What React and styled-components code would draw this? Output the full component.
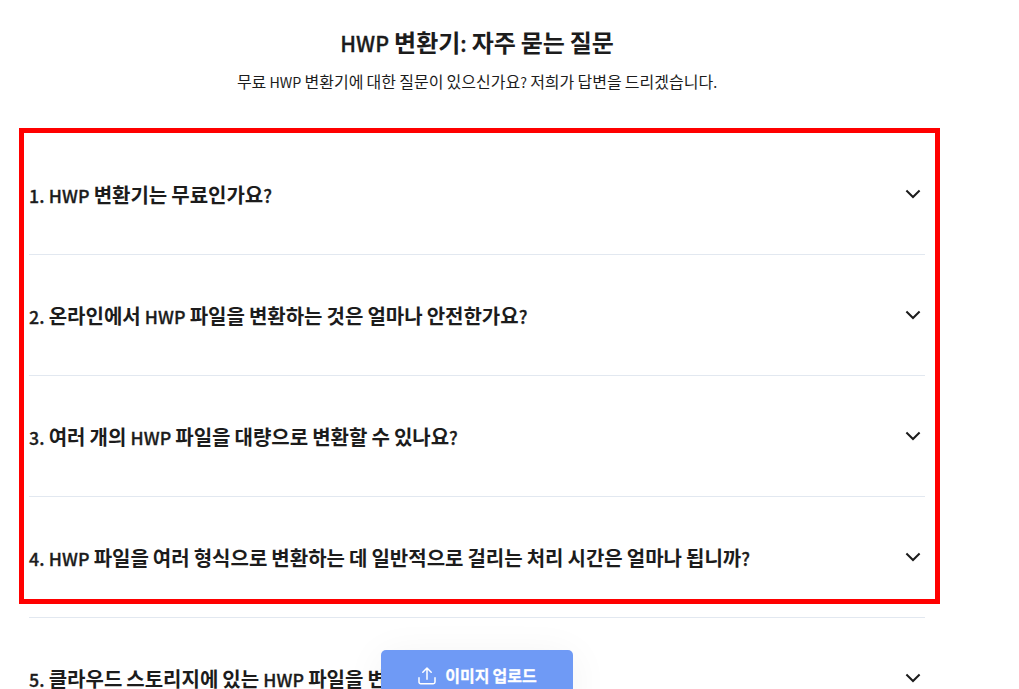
import React, { useState } from "react";
import styled, { createGlobalStyle } from "styled-components";

const questions = [
  "1. HWP 변환기는 무료인가요?",
  "2. 온라인에서 HWP 파일을 변환하는 것은 얼마나 안전한가요?",
  "3. 여러 개의 HWP 파일을 대량으로 변환할 수 있나요?",
  "4. HWP 파일을 여러 형식으로 변환하는 데 일반적으로 걸리는 처리 시간은 얼마나 됩니까?",
  "5. 클라우드 스토리지에 있는 HWP 파일을 변환할 수 있나요?",
];

const GlobalStyle = createGlobalStyle`
  * { box-sizing: border-box; }
  html, body, #root { height: 100%; }
  body {
    margin: 0;
    overflow: hidden;
    background: #fff;
    color: #1c1c1c;
    font-family: "Noto Sans CJK KR", sans-serif;
  }
`;

const Page = styled.main`
  position: relative;
  width: 954px;
  height: 100%;
  overflow: hidden;
  padding: 24px 29px 0;
`;

const Header = styled.header`
  height: 110px;
  text-align: center;
`;

const Title = styled.h2`
  margin: 0;
  font-size: 24px;
  line-height: 36px;
  font-weight: 700;
  word-spacing: -0.025em;
`;

const Subtitle = styled.p`
  margin: 9px 0 0;
  font-size: 16px;
  line-height: 24px;
  word-spacing: -0.025em;
`;

const Latin = styled.span`
  font-size: 0.89em;
  line-height: 1;
  font-weight: ${(p) => p.$weight};
  ${(p) => p.$weight > 400 && "letter-spacing: 0.1px; -webkit-text-stroke: 0.3px currentColor;"}
`;

const Row = styled.button`
  display: flex;
  align-items: center;
  justify-content: space-between;
  width: 100%;
  height: 121px;
  padding: 0 4px 0 0;
  border: 0;
  border-bottom: 1px solid #e2e8f0;
  background: none;
  color: inherit;
  font: inherit;
  text-align: left;
  white-space: nowrap;
  cursor: pointer;
`;

const Question = styled.span`
  padding-top: 2px;
  font-size: 20px;
  line-height: 30px;
  font-weight: 700;
  word-spacing: -0.025em;
`;

const Chevron = styled.svg`
  flex: none;
  margin-bottom: 1px;
  transform: ${(p) => (p.$open ? "rotate(180deg)" : "none")};
`;

/* red marker drawn over the first four questions */
const Highlight = styled.div`
  position: absolute;
  top: 128px;
  left: 19px;
  width: 921px;
  height: 476px;
  border: 5px solid #f00;
  pointer-events: none;
`;

const UploadButton = styled.button`
  position: absolute;
  top: 650px;
  left: 381px;
  display: flex;
  align-items: center;
  justify-content: center;
  gap: 9px;
  width: 192px;
  height: 52px;
  padding: 0 0 0 1px;
  border: 0;
  border-radius: 5px;
  background: #6f9af5;
  box-shadow: 0 6px 40px rgba(0, 0, 0, 0.06);
  color: #fff;
  font: inherit;
  font-size: 16px;
  font-weight: 700;
  line-height: 24px;
  word-spacing: -0.025em;
  cursor: pointer;
`;

const ButtonLabel = styled.span`
  padding-bottom: 2px;
  -webkit-text-stroke: 0.3px currentColor;
`;

// digits and latin words are set smaller than the hangul around them
const Mixed = ({ text, weight = 500 }) =>
  text.split(/([A-Z0-9.:?]+)/).map((part, i) => (i % 2 ? <Latin key={i} $weight={weight}>{part}</Latin> : part));

const FaqItem = ({ text }) => {
  const [open, setOpen] = useState(false);
  return (
    <Row onClick={() => setOpen(!open)} aria-expanded={open}>
      <Question><Mixed text={text} /></Question>
      <Chevron $open={open} width="16" height="16" viewBox="0 0 16 16" fill="none" stroke="#1c1c1c" strokeWidth="2">
        <path d="M1.4 4.5 8 11 14.6 4.5" />
      </Chevron>
    </Row>
  );
};

const App = () => (
  <>
    <GlobalStyle />
    <Page>
      <Header>
        <Title><Mixed text="HWP 변환기: 자주 묻는 질문" /></Title>
        <Subtitle>
          <Mixed text="무료 HWP 변환기에 대한 질문이 있으신가요? 저희가 답변을 드리겠습니다." weight={400} />
        </Subtitle>
      </Header>
      {questions.map((q) => <FaqItem key={q} text={q} />)}
      <Highlight />
      <UploadButton>
        <svg width="18" height="18" viewBox="0 0 18 18" fill="none" stroke="#fff" strokeWidth="1.5" strokeLinecap="round" strokeLinejoin="round">
          <path d="M9 12.2V1.2M4.8 5.2 9 1l4.2 4.2M1 10.7v4.4a1.7 1.7 0 0 0 1.7 1.7h12.6a1.7 1.7 0 0 0 1.7-1.7v-4.4" />
        </svg>
        <ButtonLabel>이미지 업로드</ButtonLabel>
      </UploadButton>
    </Page>
  </>
);

export default App;
